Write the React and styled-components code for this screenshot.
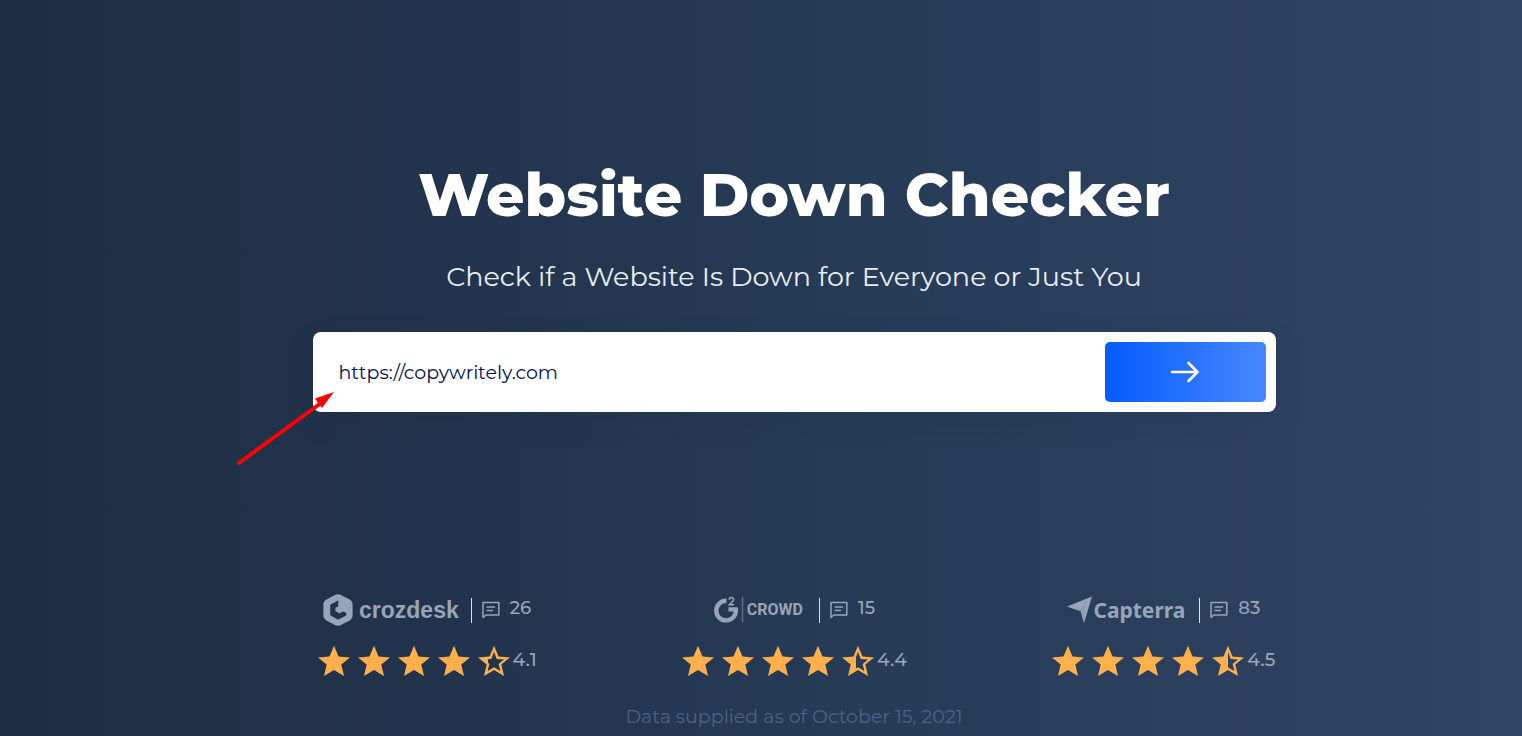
import { useId, useState } from "react";
import styled, { createGlobalStyle } from "styled-components";

const reviews = [
  { name: "crozdesk", logo: CrozdeskLogo, count: 26, rating: 4.1, last: "low" },
  { name: "g2crowd", logo: CrowdLogo, count: 15, rating: 4.4, last: "middle" },
  { name: "capterra", logo: CapterraLogo, count: 83, rating: 4.5, last: "half" },
];

export default function App() {
  const [url, setUrl] = useState("https://copywritely.com");

  return (
    <>
      <GlobalStyle />
      <Page>
        <Content>
          <Title>Website Down Checker</Title>
          <Subtitle>Check if a Website Is Down for Everyone or Just You</Subtitle>
          <Form onSubmit={(e) => e.preventDefault()}>
            <UrlInput
              type="text"
              aria-label="Website URL"
              value={url}
              onChange={(e) => setUrl(e.target.value)}
            />
            <SubmitBtn type="submit" aria-label="Check website">
              <svg width="30" height="22" viewBox="0 0 30 22" fill="none">
                <path
                  d="M2 11H27.500M18.500 2L27.500 11L18.500 20"
                  stroke="#fff"
                  strokeWidth="2.600"
                  strokeLinecap="round"
                  strokeLinejoin="round"
                />
              </svg>
            </SubmitBtn>
            <Pointer width="100" height="76" viewBox="0 0 100 76">
              <path d="M4 73L86 13" stroke="#ff0000" strokeWidth="4" strokeLinecap="round" />
              <path d="M99 2L80 8.500L83 13L87 18Z" fill="#ff0000" />
            </Pointer>
          </Form>
          <Reviews>
            {reviews.map(({ name, logo: Logo, count, rating, last }) => (
              <Review key={name}>
                <ReviewHead>
                  <Logo />
                  <Divider />
                  <CommentIcon />
                  <Count>{count}</Count>
                </ReviewHead>
                <Rating>
                  <Stars>
                    <Star type="full" />
                    <Star type="full" />
                    <Star type="full" />
                    <Star type="full" />
                    <Star type={last} />
                  </Stars>
                  <Score>{rating}</Score>
                </Rating>
              </Review>
            ))}
          </Reviews>
          <Note>Data supplied as of October 15, 2021</Note>
        </Content>
      </Page>
    </>
  );
}

const STAR =
  "M16 0.800L20.500 11.600L32 12.400L23.300 19.600L26 31L16 24.900L6 31L8.700 19.600L0 12.400L11.500 11.600Z";
const STAR_HOLE =
  "M16 7L18.800 14L26 14.500L20.600 19L22.400 26L16 22.200L9.600 26L11.400 19L6 14.500L13.200 14Z";
const fillEdge = { low: 10, middle: 14, half: 16 };

function Star({ type }) {
  const id = useId();

  return (
    <svg width="32" height="32" viewBox="0 0 32 32">
      {type === "full" ? (
        <path d={STAR} fill="#ffaf4b" />
      ) : (
        <>
          <mask id={id}>
            <rect width="32" height="32" fill="#fff" />
            <path d={STAR_HOLE} fill="#000" />
            <rect width={fillEdge[type]} height="32" fill="#fff" />
          </mask>
          <path d={STAR} fill="#ffaf4b" mask={`url(#${id})`} />
        </>
      )}
    </svg>
  );
}

function CommentIcon() {
  return (
    <svg width="18" height="18" viewBox="0 0 18 18" fill="none" stroke="#98a5b9">
      <path d="M1 16.500V1.500H16.800V14H3.800Z" strokeWidth="1.500" strokeLinejoin="round" />
      <path d="M4.600 6H13.200M4.600 9.500H11" strokeWidth="1.500" />
    </svg>
  );
}

function CrozdeskLogo() {
  return (
    <Logo>
      <svg width="30" height="32" viewBox="0 0 30 32">
        <path
          d="M12 1Q15 -0.600 18 1L27 5.800Q29.600 7.400 29.600 10V22Q29.600 24.600 27 26.200L18 31Q15 32.600 12 31L3 26.200Q0.400 24.600 0.400 22V10Q0.400 7.400 3 5.800Z"
          fill="#98a5b9"
        />
        <path
          d="M15.300 6.200L7.200 10.800V21.200L15 25.800L23.200 21.400V18.800L19.800 17.400L16.400 19.600L12.400 17V13.800L15.300 12.400Z"
          fill="#22344d"
        />
      </svg>
      <CrozdeskName>crozdesk</CrozdeskName>
    </Logo>
  );
}

function CrowdLogo() {
  return (
    <Logo>
      <svg width="30" height="28" viewBox="0 0 30 28">
        <path
          d="M12.500 4.800A9.800 9.800 0 1 0 21.800 13.400H14.500"
          fill="none"
          stroke="#98a5b9"
          strokeWidth="4.400"
        />
        <path
          d="M15.200 3.800Q15.400 1.600 17.400 1.600Q19.600 1.600 19.600 3.600Q19.600 4.800 17.600 6.600L15.400 8.800H20"
          fill="none"
          stroke="#98a5b9"
          strokeWidth="1.500"
        />
        <path d="M28.500 1V26" stroke="#5e6f88" strokeWidth="1.500" />
      </svg>
      <CrowdName>CROWD</CrowdName>
    </Logo>
  );
}

function CapterraLogo() {
  return (
    <Logo>
      <svg width="26" height="28" viewBox="0 0 26 28">
        <path d="M0 10.500L25 0.500L17 27L13.500 15L8 13.500Z" fill="#98a5b9" />
        <path d="M14 15L19 5M16 24V12" stroke="#8190a7" strokeWidth="0.800" />
      </svg>
      <CapterraName>Capterra</CapterraName>
    </Logo>
  );
}

const GlobalStyle = createGlobalStyle`
  * {
    box-sizing: border-box;
  }
  body {
    margin: 0;
    font-family: Montserrat, Inter, sans-serif;
  }
`;

const Page = styled.main`
  min-height: 100vh;
  display: flex;
  justify-content: center;
  padding: 157px 20px 6px 86px;
  background: linear-gradient(90deg, #1d2e43 0%, #22344d 30%, #263b56 55%, #304464 100%);
`;
const Content = styled.div`
  width: 100%;
  max-width: 963px;
  display: flex;
  flex-direction: column;
`;
const Title = styled.h1`
  margin: 0;
  color: #fff;
  font-size: 60px;
  font-weight: 800;
  line-height: 76px;
  text-align: center;
`;
const Subtitle = styled.p`
  margin: 24px 0 35px;
  color: #e9edf2;
  font-size: 27px;
  font-weight: 400;
  line-height: 40px;
  text-align: center;
`;
const Form = styled.form`
  position: relative;
  display: flex;
  padding: 10px;
  border-radius: 8px;
  background-color: #fff;
  box-shadow: 0 10px 30px rgba(27, 39, 61, 0.1);
`;
const UrlInput = styled.input`
  flex: 1;
  min-width: 0;
  padding: 0 16px;
  border: 0;
  outline: 0;
  background: none;
  color: #00124f;
  font-family: inherit;
  font-size: 19px;
  font-weight: 400;
`;
const SubmitBtn = styled.button`
  display: flex;
  justify-content: center;
  align-items: center;
  width: 161px;
  height: 60px;
  border: 0;
  border-radius: 5px;
  background: linear-gradient(90deg, #055bff, #4788ff);
  cursor: pointer;
`;
const Pointer = styled.svg`
  position: absolute;
  left: -78px;
  top: 58px;
  pointer-events: none;
`;
const Reviews = styled.div`
  display: flex;
  justify-content: space-between;
  margin-top: 180px;
  padding-left: 5px;
`;
const Review = styled.div`
  display: flex;
  flex-direction: column;
  align-items: center;
  gap: 17px;
`;
const ReviewHead = styled.div`
  display: flex;
  align-items: center;
  height: 36px;
  gap: 10px;
`;
const Logo = styled.div`
  display: flex;
  align-items: center;
  color: #98a5b9;
  line-height: 28px;
`;
const CrozdeskName = styled.span`
  margin-left: 6px;
  margin-right: 2px;
  font-family: "Liberation Sans", sans-serif;
  font-size: 23px;
  font-weight: 700;
`;
const CrowdName = styled.span`
  margin-left: 3px;
  margin-right: 6px;
  font-family: Roboto, sans-serif;
  font-size: 16px;
  font-weight: 700;
`;
const CapterraName = styled.span`
  margin-right: 4px;
  font-family: "Noto Sans", sans-serif;
  font-size: 21px;
  font-weight: 700;
`;
const Divider = styled.span`
  width: 1px;
  height: 25px;
  background-color: #dde2ea;
`;
const Count = styled.span`
  padding-bottom: 4px;
  color: #98a5b9;
  font-size: 18px;
  font-weight: 500;
  line-height: 24px;
`;
const Rating = styled.div`
  display: flex;
  align-items: center;
  gap: 3px;
`;
const Stars = styled.div`
  display: flex;
  gap: 8px;
`;
const Score = styled.span`
  padding-bottom: 3px;
  color: #98a5b9;
  font-size: 19px;
  font-weight: 500;
  line-height: 24px;
`;
const Note = styled.p`
  margin: 28px 0 0;
  color: #4c6285;
  font-size: 19px;
  font-weight: 400;
  line-height: 24px;
  text-align: center;
`;
